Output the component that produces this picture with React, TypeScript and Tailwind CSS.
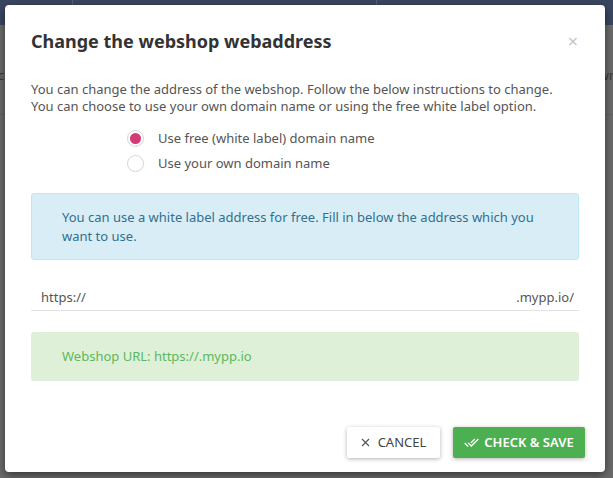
import React from "react";

export default function App() {
  return (
    <div
      className="relative w-[613px] h-[478px] overflow-hidden bg-[#6b6b6b]"
      style={{ fontFamily: '"Noto Sans", "Open Sans", sans-serif' }}
    >
      {/* background page (dimmed) */}
      <div className="flex flex-col h-full">
        <div className="h-[25px] bg-[#3a4660] flex items-end">
          <div className="ml-[72px] w-[305px] h-[25px] border-x border-[#55607a] flex items-center pl-[12px] gap-[10px] text-[#6f7a90] text-[14px]">
            <svg width="12" height="12" viewBox="0 0 12 12">
              <circle cx="5" cy="5" r="3.8" stroke="#6f7a90" strokeWidth="1.3" fill="none" />
              <path d="M8 8L11 11" stroke="#6f7a90" strokeWidth="1.3" />
            </svg>
            <span>Search</span>
          </div>
        </div>
        <div className="flex-1 bg-[#6b6b6b]">
          <div className="h-[90px] border-b border-[#626262] flex justify-between items-start text-[13px] leading-[18px] text-[#3a3a3a] pt-[41px]">
            <span className="-ml-[2px]">ch</span>
            <span className="-mr-[4px]">wn</span>
          </div>
        </div>
      </div>

      {/* modal */}
      <div className="absolute left-[5px] top-[5px] w-[600px] h-[467px] bg-white rounded-[4px] shadow-[0_3px_9px_rgba(0,0,0,0.5)] flex flex-col px-[26px]">
        <div className="flex items-start justify-between pt-[21px]">
          <h4 className="text-[18px] font-bold text-[#333] leading-[30px]">
            Change the webshop webaddress
          </h4>
          <span className="text-[#c4c4c4] text-[18px] leading-none mt-[6px] mr-[1px]">
            ×
          </span>
        </div>

        <p className="mt-[25px] text-[13px] leading-[17px] text-[#555]">
          You can change the address of the webshop. Follow the below instructions to change.
          <br />
          You can choose to use your own domain name or using the free white label option.
        </p>

        <div className="mt-[11px] ml-[96px] flex flex-col">
          <label className="flex items-center h-[25px] gap-[14px] text-[13px] text-[#555]">
            <span className="w-[17px] h-[17px] rounded-full border border-[#d4d4d4] flex items-center justify-center">
              <span className="w-[11px] h-[11px] rounded-full bg-[#d43b74]" />
            </span>
            Use free (white label) domain name
          </label>
          <label className="flex items-center h-[25px] gap-[14px] text-[13px] text-[#555]">
            <span className="w-[17px] h-[17px] rounded-full border border-[#d4d4d4]" />
            Use your own domain name
          </label>
        </div>

        <div className="mt-[17px] bg-[#d9edf7] border border-[#bce8f1] rounded-[3px] pl-[30px] pr-[20px] pt-[14px] pb-[13px] text-[13px] leading-[19px] text-[#31708f]">
          You can use a white label address for free. Fill in below the address which you
          <br />
          want to use.
        </div>

        <div className="mt-[16px] flex h-[35px] pt-[9px] text-[13px] text-[#555] border-b border-[#e3e3e3]">
          <div className="flex items-center pl-[10px]">https://</div>
          <div className="flex-1" />
          <div className="flex items-center pr-[5px]">.mypp.io/</div>
        </div>

        <div className="mt-[21px] h-[49px] bg-[#dff0d8] rounded-[3px] pl-[31px] flex items-center text-[13px] text-[#5cb85c]">
          Webshop URL: https://.mypp.io
        </div>

        <div className="mt-auto mb-[14px] flex justify-end gap-[13px] -mr-[6px]">
          <button className="h-[31px] w-[93px] bg-white rounded-[2px] shadow-[0_1px_4px_rgba(0,0,0,0.3)] flex items-center justify-center gap-[8px] text-[13px] text-[#444]">
            <svg width="9" height="9" viewBox="0 0 9 9" className="text-[#555]">
              <path d="M1 1L8 8M8 1L1 8" stroke="currentColor" strokeWidth="1.2" />
            </svg>
            CANCEL
          </button>
          <button className="h-[31px] w-[132px] bg-[#4caf50] rounded-[2px] shadow-[0_1px_4px_rgba(0,0,0,0.3)] flex items-center justify-center gap-[5px] text-[13px] font-semibold text-white">
            <svg width="15" height="15" viewBox="0 0 24 24" fill="white">
              <path d="M18 7l-1.41-1.41-6.34 6.34 1.41 1.41L18 7zm4.24-1.41L11.66 16.17 7.48 12l-1.41 1.41L11.66 19l12-12-1.42-1.41zM.41 13.41L6 19l1.41-1.41L1.83 12 .41 13.41z" />
            </svg>
            CHECK &amp; SAVE
          </button>
        </div>
      </div>
    </div>
  );
}
